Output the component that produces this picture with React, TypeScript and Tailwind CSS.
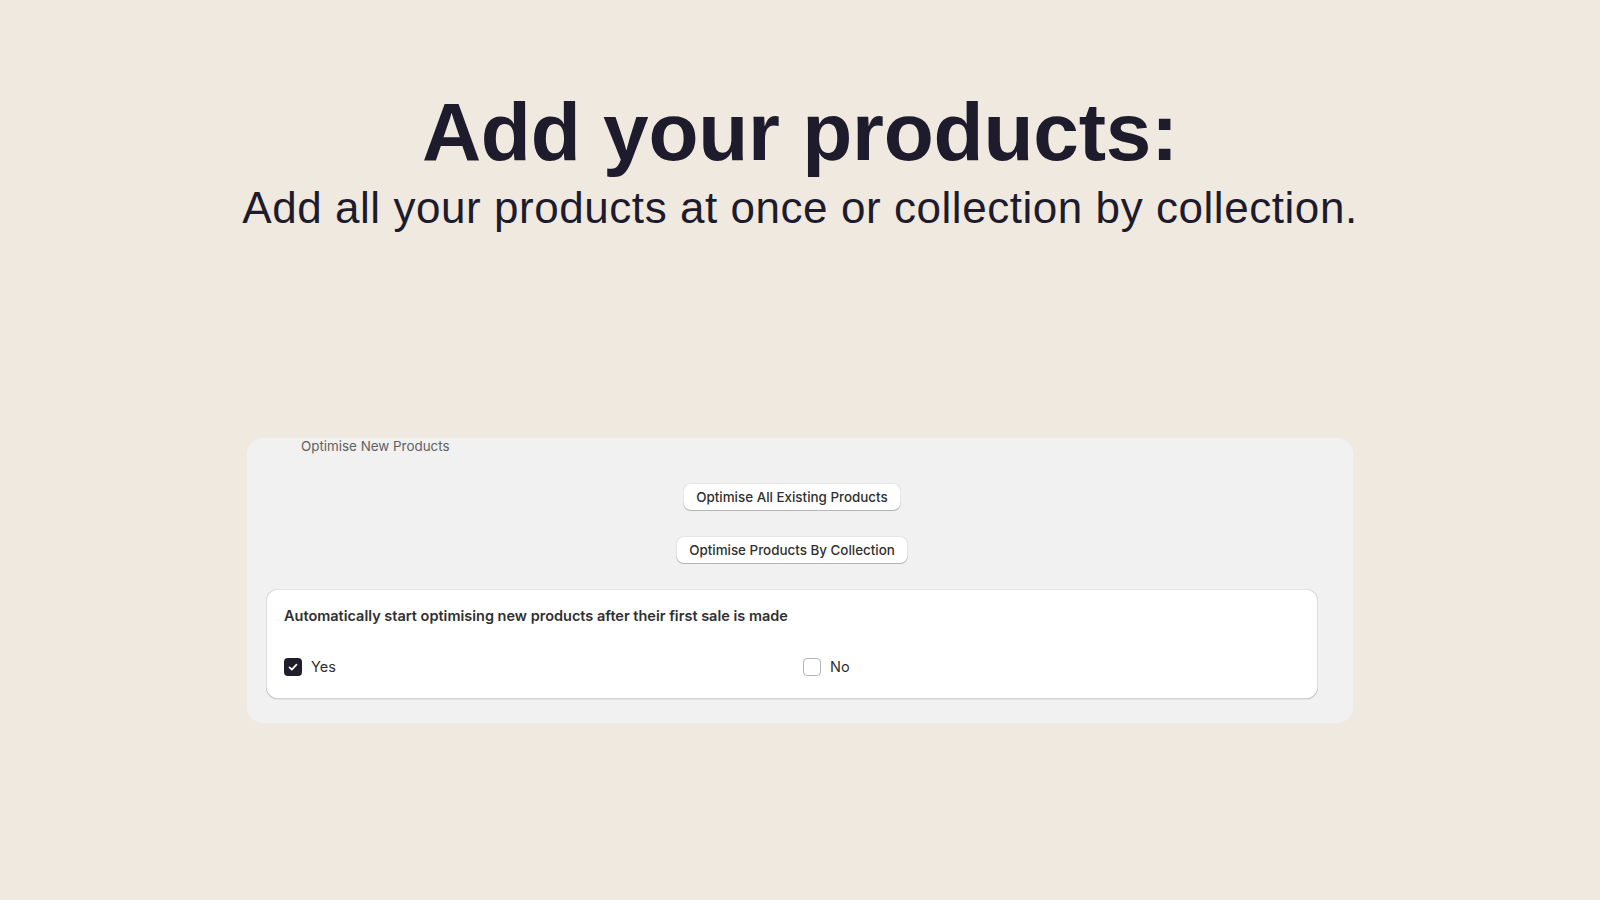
import { useState } from "react";

function Box({ on, label, click }: { on: boolean; label: string; click: () => void }) {
  return (
    <label className="flex items-center gap-[9px] cursor-pointer" onClick={click}>
      {on ? (
        <span className="flex h-[18px] w-[18px] items-center justify-center rounded-[4px] bg-[#1f1e2a]">
          <svg width="12" height="12" viewBox="0 0 12 12" fill="none">
            <path d="M2.5 6.3l2.3 2.3 4.7-5" stroke="#fff" strokeWidth="1.7" strokeLinecap="round" strokeLinejoin="round" />
          </svg>
        </span>
      ) : (
        <span className="h-[18px] w-[18px] rounded-[4px] border border-[#b5b5b5] bg-white" />
      )}
      <span className="text-[14.5px] leading-5 text-[#303030]">{label}</span>
    </label>
  );
}

export default function App() {
  const [auto, setAuto] = useState(true);

  return (
    <div className="min-h-screen w-full bg-[#f0e9df] flex flex-col items-center font-['Liberation_Sans',Arial,sans-serif] text-[#1d1b2c]">
      <h1 className="pt-[91px] text-[82px] leading-[82px] font-bold tracking-[-0.25px]">Add your products:</h1>
      <p className="mt-[13px] text-[44px] leading-[44px] tracking-[0.55px]">Add all your products at once or collection by collection.</p>

      <div className="mt-[208px] h-[285px] w-[1106px] rounded-2xl bg-[#f1f1f1] pl-[19px] pr-[35px] font-['Inter',sans-serif]">
        <div className="ml-[35px] text-[13.4px] leading-4 text-[#616161]">Optimise New Products</div>

        <div className="mt-[29px] flex flex-col items-center gap-[25px]">
          <button className="h-[28px] rounded-lg bg-white px-[13px] text-[13.4px] font-medium text-[#303030] shadow-[inset_0_-1px_0_0_#b5b5b5,inset_0_0_0_1px_rgba(0,0,0,0.1)]">
            Optimise All Existing Products
          </button>
          <button className="h-[28px] rounded-lg bg-white px-[13px] text-[13.4px] font-medium text-[#303030] shadow-[inset_0_-1px_0_0_#b5b5b5,inset_0_0_0_1px_rgba(0,0,0,0.1)]">
            Optimise Products By Collection
          </button>
        </div>

        <div className="mt-[25px] h-[110px] rounded-xl bg-white px-[18px] pt-[17px] shadow-[0_1px_0_0_rgba(26,26,26,0.07),inset_0_1px_0_0_rgba(204,204,204,0.5),inset_0_-1px_0_0_rgba(0,0,0,0.17),inset_-1px_0_0_0_rgba(0,0,0,0.13),inset_1px_0_0_0_rgba(0,0,0,0.13)]">
          <div className="text-[14.5px] leading-5 font-semibold text-[#303030]">
            Automatically start optimising new products after their first sale is made
          </div>
          <div className="mt-[31px] grid grid-cols-2 gap-x-[22px]">
            <Box on={auto} label="Yes" click={() => setAuto(true)} />
            <Box on={!auto} label="No" click={() => setAuto(false)} />
          </div>
        </div>
      </div>
    </div>
  );
}
